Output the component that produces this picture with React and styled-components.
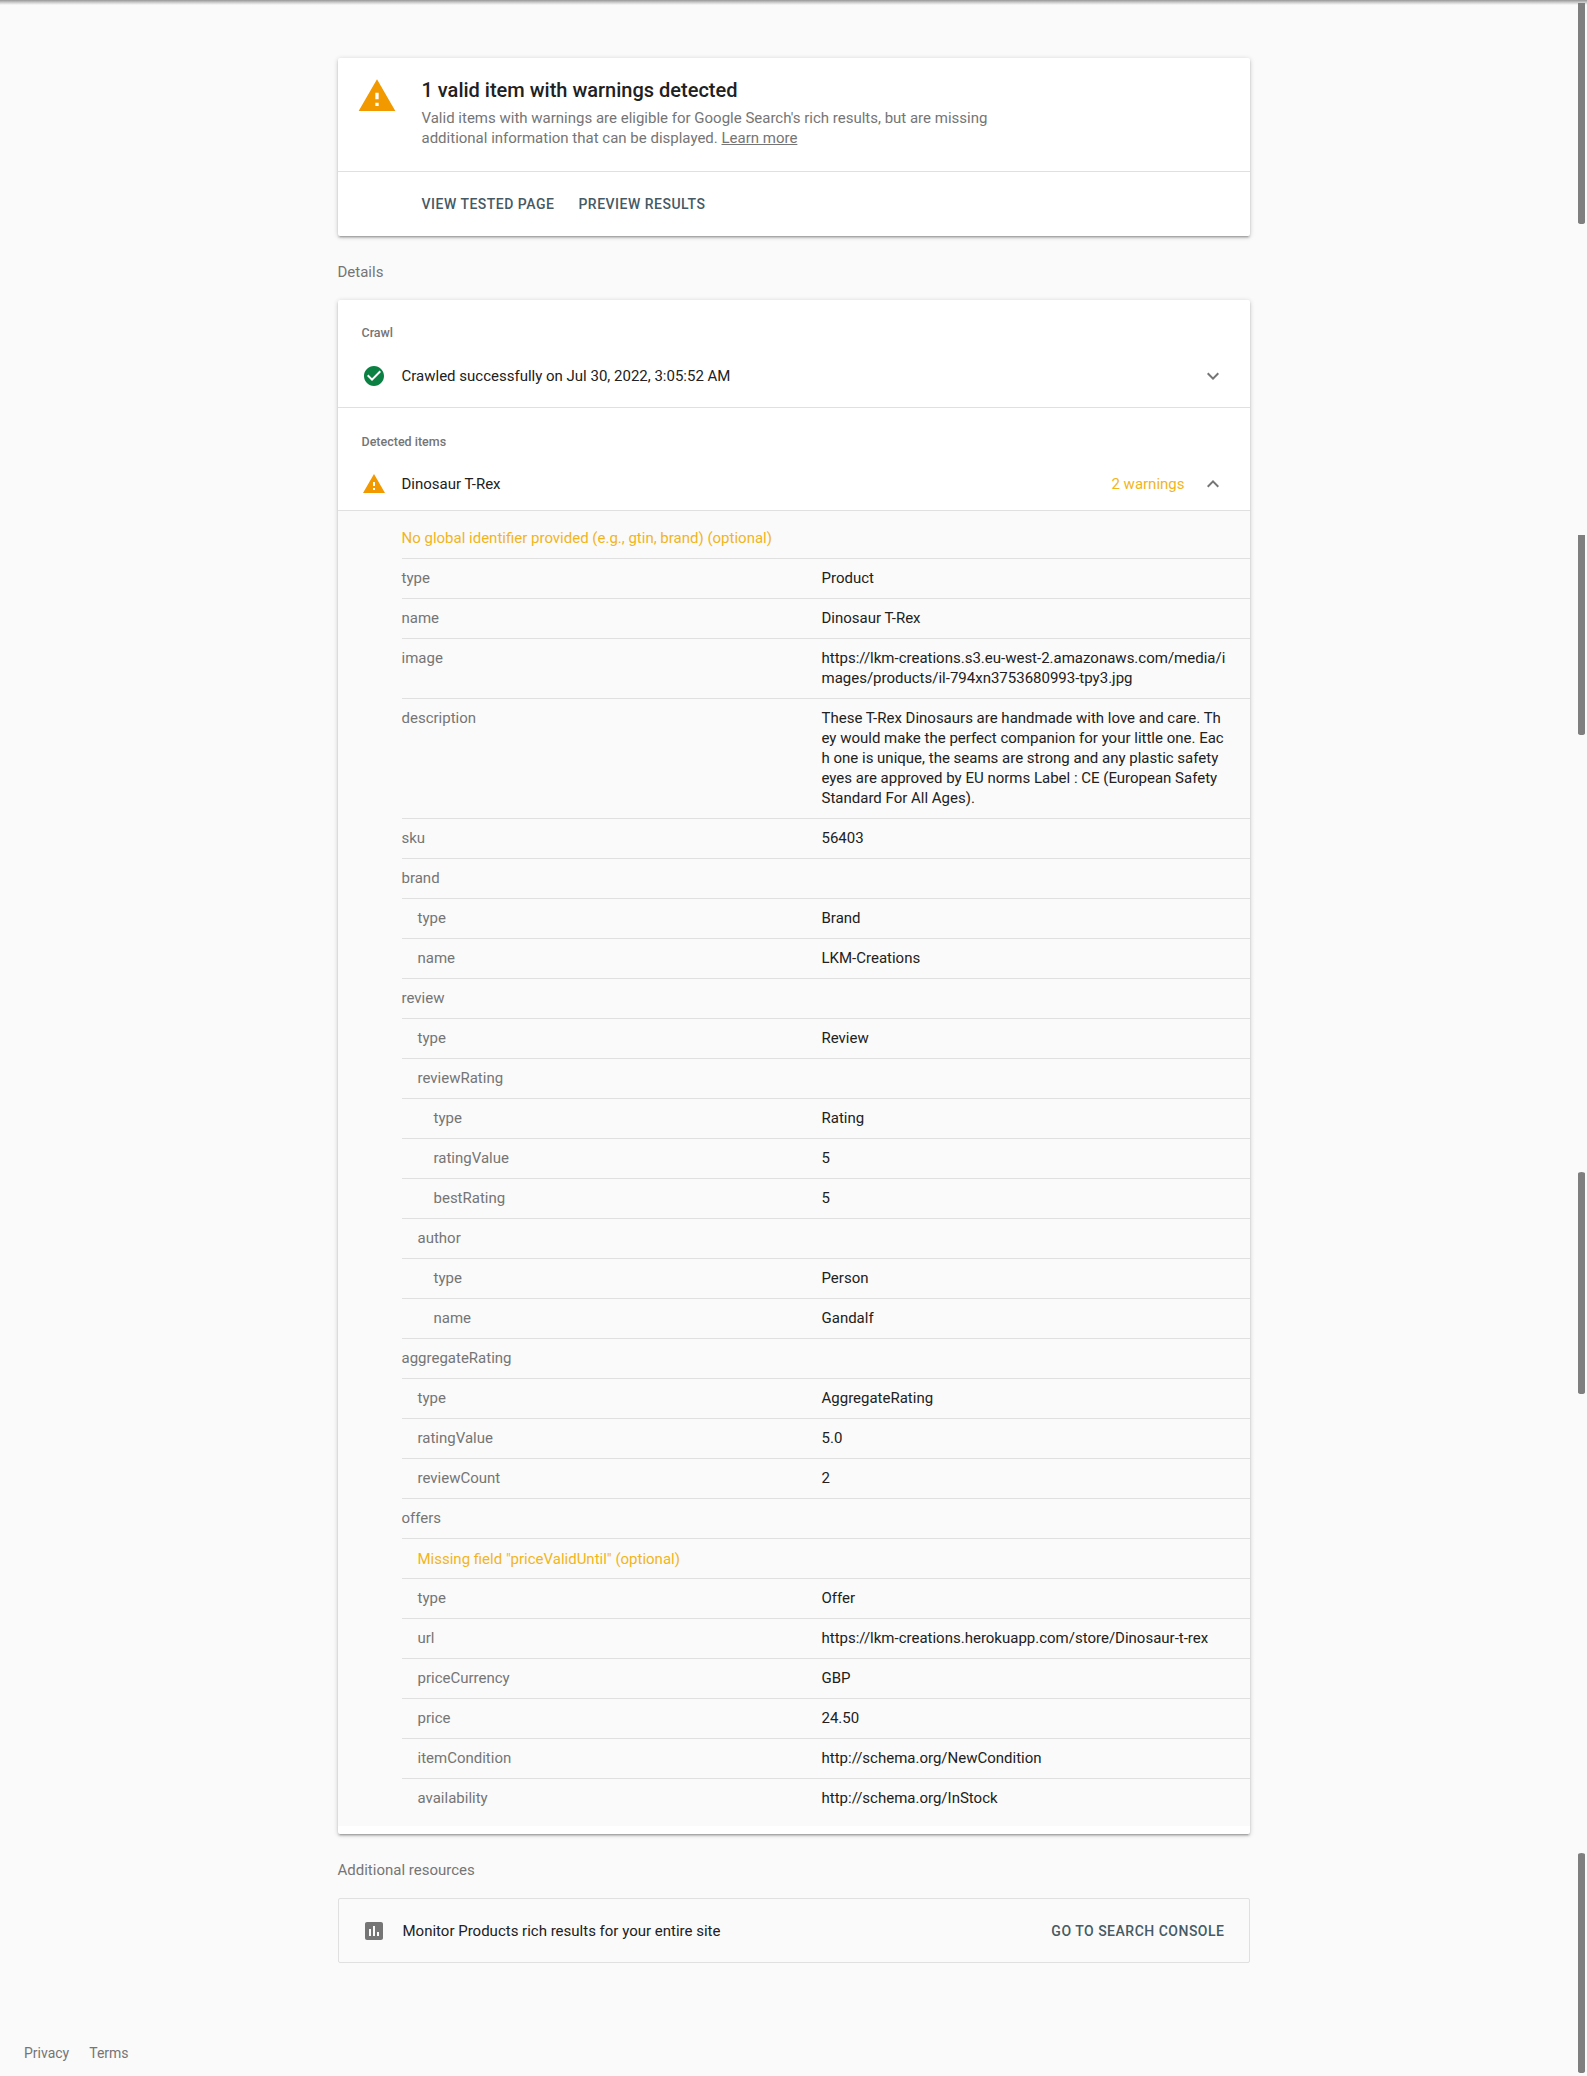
import React from 'react';
import styled, { createGlobalStyle } from 'styled-components';

const GlobalStyle = createGlobalStyle`
  html, body {
    margin: 0;
    padding: 0;
    background: #fafafa;
    font-family: Roboto, "Liberation Sans", sans-serif;
    overflow: hidden;
  }
  * { box-sizing: border-box; }
`

const Page = styled.div`
  position: relative;
  min-height: 100vh;
  display: flex;
  flex-direction: column;
`

const TopShadow = styled.div`
  position: absolute;
  top: 0;
  left: 0;
  right: 0;
  height: 5px;
  background: linear-gradient(#969696, #c8c8c8 45%, #fafafa);
`

const ScrollThumb = styled.div`
  position: absolute;
  right: 2px;
  width: 7px;
  top: ${({ top }) => top}px;
  height: ${({ size }) => size}px;
  background: #7f7f7f;
  border-radius: ${({ rounded }) => rounded === 'bottom' ? '0 0 4px 4px / 0 0 2px 2px' : '4px / 2px'};
`

const Main = styled.main`
  width: 912px;
  margin: 58px auto 0;
`

const Card = styled.section`
  background: #fff;
  border-radius: 2px;
  padding-bottom: ${({ bottom }) => bottom || 0}px;
  box-shadow: 0 2px 2px 0 rgba(0, 0, 0, .14), 0 3px 1px -2px rgba(0, 0, 0, .12), 0 1px 5px 0 rgba(0, 0, 0, .2);
`

const SummaryTop = styled.div`
  height: 114px;
  display: flex;
  border-bottom: 1px solid #e0e0e0;
  padding: 18px 0 0 19px;
`

const SummaryIcon = styled.svg`
  width: 40px;
  height: 40px;
  fill: #f29900;
  flex: none;
`

const SummaryText = styled.div`
  margin-left: 25px;
  width: 600px;
`

const Title = styled.h1`
  margin: 0 0 4px;
  font-size: 20px;
  font-weight: 500;
  line-height: 28px;
  color: #212121;
`

const Description = styled.p`
  margin: 0;
  font-size: 15px;
  line-height: 20px;
  color: #757575;
`

const LearnMore = styled.a`
  color: #757575;
  text-decoration: underline;
`

const SummaryActions = styled.div`
  height: 64px;
  display: flex;
  align-items: center;
  gap: 24px;
  padding-left: 84px;
`

const ActionLink = styled.a`
  font-size: 14px;
  font-weight: 500;
  letter-spacing: .5px;
  line-height: 20px;
  color: #455a64;
`

const SectionTitle = styled.h2`
  margin: 0;
  height: 20px;
  font-size: 15px;
  font-weight: 400;
  line-height: 20px;
  color: #757575;
  margin-top: ${({ top }) => top}px;
  margin-bottom: ${({ bottom }) => bottom}px;
`

const Group = styled.div`
  border-bottom: ${({ divided }) => divided ? '1px solid #e0e0e0' : '0'};
`

const GroupLabel = styled.div`
  font-size: 12.5px;
  font-weight: 500;
  line-height: 16px;
  color: #757575;
  padding: ${({ top }) => top}px 24px 0;
`

const GroupRow = styled.div`
  height: ${({ size }) => size}px;
  display: flex;
  align-items: center;
  padding: ${({ top }) => top}px 25px 0 24px;
`

const GroupIcon = styled.svg`
  width: 24px;
  height: 24px;
  margin-right: 16px;
  flex: none;
  fill: ${({ tone }) => tone};
`

const GroupName = styled.span`
  flex: 1;
  font-size: 15px;
  line-height: 20px;
  color: #212121;
`

const WarningCount = styled.span`
  font-size: 15px;
  line-height: 20px;
  color: #f1b51c;
  margin-right: 16px;
`

const Chevron = styled.svg`
  width: 24px;
  height: 24px;
  fill: #757575;
  flex: none;
`

const Details = styled.div`
  background: #fafafa;
  border-top: 1px solid #e0e0e0;
  padding: 7px 0 8px 64px;
`

const WarningRow = styled.div`
  min-height: 40px;
  display: flex;
  align-items: center;
  font-size: 15px;
  line-height: 20px;
  color: #f1b51c;
  padding-left: ${({ level }) => level * 16}px;
  border-top: ${({ first }) => first ? '0' : '1px solid #e0e0e0'};
`

const Row = styled.div`
  display: flex;
  font-size: 15px;
  line-height: 20px;
  border-top: 1px solid #e0e0e0;
  padding: 9px 24px 10px 0;
`

const Key = styled.div`
  width: 420px;
  flex: none;
  color: #757575;
  padding-left: ${({ level }) => level * 16}px;
`

const Value = styled.div`
  flex: 1;
  min-width: 0;
  color: #212121;
  word-break: break-all;
  min-height: 20px;
`

const ResourceCard = styled.div`
  height: 65px;
  display: flex;
  align-items: center;
  border: 1px solid #e0e0e0;
  border-radius: 2px;
  padding: 0 24px 0 23px;
`

const ResourceText = styled.span`
  flex: 1;
  font-size: 15px;
  line-height: 20px;
  color: #212121;
  margin-left: 1px;
`

const Footer = styled.footer`
  margin-top: auto;
  display: flex;
  gap: 20px;
  padding: 0 0 15px 24px;
  font-size: 14px;
  line-height: 16px;
  color: #757575;
`

const WARNING = 'M1 21h22L12 2 1 21zm12-3h-2v-2h2v2zm0-4h-2v-4h2v4z'
const CHECK = 'M12 2C6.48 2 2 6.48 2 12s4.48 10 10 10 10-4.48 10-10S17.52 2 12 2zm-2 15l-5-5 1.41-1.41L10 14.17l7.59-7.59L19 8l-9 9z'
const EXPAND = 'M16.59 8.59L12 13.17 7.41 8.59 6 10l6 6 6-6z'
const COLLAPSE = 'M12 8l-6 6 1.41 1.41L12 10.83l4.59 4.58L18 14z'
const CHART = 'M19 3H5c-1.1 0-2 .9-2 2v14c0 1.1.9 2 2 2h14c1.1 0 2-.9 2-2V5c0-1.1-.9-2-2-2zM9 17H7v-7h2v7zm4 0h-2V7h2v10zm4 0h-2v-4h2v4z'

const rows = [
  { warning: 'No global identifier provided (e.g., gtin, brand) (optional)', level: 0, first: true },
  { k: 'type', v: 'Product', level: 0 },
  { k: 'name', v: 'Dinosaur T-Rex', level: 0 },
  { k: 'image', v: 'https://lkm-creations.s3.eu-west-2.amazonaws.com/media/images/products/il-794xn3753680993-tpy3.jpg', level: 0 },
  { k: 'description', v: 'These T-Rex Dinosaurs are handmade with love and care. They would make the perfect companion for your little one. Each one is unique, the seams are strong and any plastic safety eyes are approved by EU norms Label : CE (European Safety Standard For All Ages).', level: 0 },
  { k: 'sku', v: '56403', level: 0 },
  { k: 'brand', level: 0 },
  { k: 'type', v: 'Brand', level: 1 },
  { k: 'name', v: 'LKM-Creations', level: 1 },
  { k: 'review', level: 0 },
  { k: 'type', v: 'Review', level: 1 },
  { k: 'reviewRating', level: 1 },
  { k: 'type', v: 'Rating', level: 2 },
  { k: 'ratingValue', v: '5', level: 2 },
  { k: 'bestRating', v: '5', level: 2 },
  { k: 'author', level: 1 },
  { k: 'type', v: 'Person', level: 2 },
  { k: 'name', v: 'Gandalf', level: 2 },
  { k: 'aggregateRating', level: 0 },
  { k: 'type', v: 'AggregateRating', level: 1 },
  { k: 'ratingValue', v: '5.0', level: 1 },
  { k: 'reviewCount', v: '2', level: 1 },
  { k: 'offers', level: 0 },
  { warning: 'Missing field "priceValidUntil" (optional)', level: 1 },
  { k: 'type', v: 'Offer', level: 1 },
  { k: 'url', v: 'https://lkm-creations.herokuapp.com/store/Dinosaur-t-rex', level: 1 },
  { k: 'priceCurrency', v: 'GBP', level: 1 },
  { k: 'price', v: '24.50', level: 1 },
  { k: 'itemCondition', v: 'http://schema.org/NewCondition', level: 1 },
  { k: 'availability', v: 'http://schema.org/InStock', level: 1 },
]

const thumbs = [
  { top: 3, size: 221, rounded: 'bottom' },
  { top: 535, size: 200, rounded: 'bottom' },
  { top: 1172, size: 222 },
  { top: 1853, size: 220 },
]

export default function App() {
  return (
    <Page>
      <GlobalStyle />
      <TopShadow />
      {thumbs.map(t => <ScrollThumb key={t.top} {...t} />)}

      <Main>
        <Card>
          <SummaryTop>
            <SummaryIcon viewBox="0 0 24 24"><path d={WARNING} /></SummaryIcon>
            <SummaryText>
              <Title>1 valid item with warnings detected</Title>
              <Description>
                Valid items with warnings are eligible for Google Search's rich results, but are missing additional information that can be displayed. <LearnMore>Learn more</LearnMore>
              </Description>
            </SummaryText>
          </SummaryTop>
          <SummaryActions>
            <ActionLink>VIEW TESTED PAGE</ActionLink>
            <ActionLink>PREVIEW RESULTS</ActionLink>
          </SummaryActions>
        </Card>

        <SectionTitle top={26} bottom={18}>Details</SectionTitle>

        <Card bottom={8}>
          <Group divided>
            <GroupLabel top={25}>Crawl</GroupLabel>
            <GroupRow size={66} top={4}>
              <GroupIcon tone="#0b8043" viewBox="0 0 24 24"><path d={CHECK} /></GroupIcon>
              <GroupName>Crawled successfully on Jul 30, 2022, 3:05:52 AM</GroupName>
              <Chevron viewBox="0 0 24 24"><path d={EXPAND} /></Chevron>
            </GroupRow>
          </Group>
          <Group>
            <GroupLabel top={26}>Detected items</GroupLabel>
            <GroupRow size={60} top={8}>
              <GroupIcon tone="#f29900" viewBox="0 0 24 24"><path d={WARNING} /></GroupIcon>
              <GroupName>Dinosaur T-Rex</GroupName>
              <WarningCount>2 warnings</WarningCount>
              <Chevron viewBox="0 0 24 24"><path d={COLLAPSE} /></Chevron>
            </GroupRow>
            <Details>
              {rows.map((r, idx) => r.warning
                ? <WarningRow key={idx} level={r.level} first={r.first}>{r.warning}</WarningRow>
                : (
                  <Row key={idx}>
                    <Key level={r.level}>{r.k}</Key>
                    <Value>{r.v}</Value>
                  </Row>
                ))}
            </Details>
          </Group>
        </Card>

        <SectionTitle top={26} bottom={18}>Additional resources</SectionTitle>

        <ResourceCard>
          <GroupIcon tone="#757575" viewBox="0 0 24 24"><path d={CHART} /></GroupIcon>
          <ResourceText>Monitor Products rich results for your entire site</ResourceText>
          <ActionLink>GO TO SEARCH CONSOLE</ActionLink>
        </ResourceCard>
      </Main>

      <Footer>
        <span>Privacy</span>
        <span>Terms</span>
      </Footer>
    </Page>
  )
}
